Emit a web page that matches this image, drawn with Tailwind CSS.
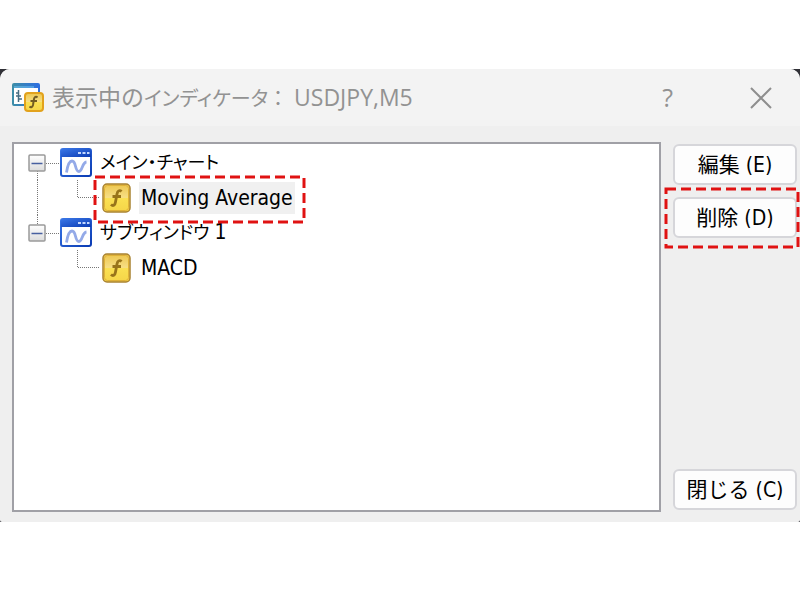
<!DOCTYPE html>
<html lang="ja">
<head>
    <meta charset="UTF-8">
    <meta name="viewport" content="width=device-width, initial-scale=1.0">
    <title>表示中のインディケータ</title>
    <script src="https://cdn.jsdelivr.net/npm/@tailwindcss/browser@4"></script>
</head>
<body class="flex min-h-screen flex-col bg-white pt-[69px] pb-[78px]">
    <!-- Shared icons -->
    <svg class="absolute h-0 w-0" aria-hidden="true">
        <defs>
            <linearGradient id="gold" x1="0" y1="0" x2="0" y2="1">
                <stop offset="0" stop-color="#edc64e"/>
                <stop offset=".48" stop-color="#f6de84"/>
                <stop offset=".52" stop-color="#fae052"/>
                <stop offset="1" stop-color="#f5d548"/>
            </linearGradient>
            <linearGradient id="blue" x1="0" y1="0" x2="1" y2="1">
                <stop offset="0" stop-color="#3a76e6"/>
                <stop offset="1" stop-color="#0b3cb4"/>
            </linearGradient>
            <linearGradient id="pane" x1="0" y1="0" x2="1" y2="0">
                <stop offset="0" stop-color="#3d8da8"/>
                <stop offset="1" stop-color="#2d6fe0"/>
            </linearGradient>
            <linearGradient id="key" x1="0" y1="0" x2="0" y2="1">
                <stop offset="0" stop-color="#ffffff"/>
                <stop offset="1" stop-color="#dcdcdc"/>
            </linearGradient>
        </defs>
        <symbol id="icon-chart" viewBox="0 0 32 29">
            <rect x="1" y="1" width="30" height="27" rx="2" fill="#fff" stroke="url(#blue)" stroke-width="2"/>
            <path d="M1 9V2.500Q1 1 2.500 1H29.500Q31 1 31 2.500V9Z" fill="url(#blue)"/>
            <path d="M18 4h3v2h-3zM22.500 4h3v2h-3zM27 4h2.500v2H27z" fill="#c4d8ff"/>
            <path d="M6.500 24.500C7.500 18 9 13 12 13C16.500 13 14.500 23.500 19 23.500C22.500 23.500 22 14.500 26.500 14" fill="none" stroke="#94aae8" stroke-width="2.800"/>
        </symbol>
        <symbol id="icon-function" viewBox="0 0 30 30">
            <rect x="1" y="1" width="27" height="28" rx="4" fill="url(#gold)" stroke="#a98332" stroke-width="1.500"/>
            <rect x="2.500" y="2.500" width="24" height="25" rx="3" fill="none" stroke="#dfb137"/>
            <path d="M19.500 8.500C17.500 6.500 15.500 8 15 11L13.500 19C13 22.500 11 23.500 9 21.500M10.500 13.500H19" fill="none" stroke="#98741a" stroke-width="2.800"/>
        </symbol>
    </svg>

    <div class="flex flex-1 flex-col bg-[#303036]">
        <div class="flex flex-1 flex-col overflow-hidden rounded-t-[10px] rounded-b-[2px] bg-[#efefef]">
            <!-- Title bar -->
            <header class="flex h-[57px] items-center bg-[#f3f3f3] pr-7 pl-3 text-[#929292]">
                <svg class="h-8 w-8 shrink-0" viewBox="0 0 32 32">
                    <rect x="1" y="2" width="26" height="21" rx="1" fill="#fff" stroke="url(#pane)" stroke-width="2"/>
                    <path d="M1 2H27V6H1Z" fill="url(#pane)"/>
                    <path d="M2 5H22" stroke="#73c6f5" stroke-width="1"/>
                    <path d="M6.500 8V20M4 11H6.500M6.500 17H10M4 14H9" fill="none" stroke="#476d83" stroke-width="1.500"/>
                    <rect x="13" y="11" width="18" height="18" rx="3" fill="url(#gold)" stroke="#e2a21c" stroke-width="2"/>
                    <path d="M25.500 15.500C24 14 22.500 15 22 17L21 23C20.500 25 19 26 17.500 24.500M18.500 19H25" fill="none" stroke="#725c22" stroke-width="2"/>
                </svg>
                <h1 class="ml-2 flex-1 font-['Open_Sans','Noto_Sans_CJK_JP',sans-serif] text-[23px]">表示中の<span class="text-[20px] [font-feature-settings:'palt']">インディケータ</span><span class="text-[20px]">：</span><span class="ml-[6px]">USDJPY,M5</span></h1>
                <button type="button" aria-label="ヘルプ" class="mr-[77px] font-['Open_Sans',sans-serif] text-[25px]">?</button>
                <button type="button" aria-label="閉じる">
                    <svg class="h-[22px] w-[22px]" viewBox="0 0 22 22"><path d="M1 1L21 21M21 1L1 21" fill="none" stroke="#8e8e8e" stroke-width="2"/></svg>
                </button>
            </header>

            <main class="flex flex-1 gap-3 pt-4 pr-[3px] pb-[10px] pl-3 font-['DejaVu_Sans_Condensed','Noto_Sans_CJK_JP',sans-serif] text-black">
                <!-- Indicator tree -->
                <ul class="flex-1 border-2 border-[#a0a0a6] bg-white pt-px pl-[14px] leading-6">
                    <li class="flex h-[35px] items-center">
                        <button type="button" aria-label="折りたたむ" class="h-[35px] w-8">
                            <svg class="h-[35px] w-8" viewBox="0 0 32 35">
                                <path d="M9.500 26V35M18 18.500H32" stroke="#777" stroke-dasharray="1 1"/>
                                <rect x="1" y="10" width="16" height="16" rx="1" fill="url(#key)" stroke="#9a9a9a" stroke-width="1.500"/>
                                <path d="M3.500 18.500H14.500" stroke="#4860a0" stroke-width="1.500"/>
                            </svg>
                        </button>
                        <svg class="h-[29px] w-8"><use href="#icon-chart"/></svg>
                        <span class="ml-2 text-[18px] [font-feature-settings:'palt']">メイン・チャート</span>
                    </li>
                    <li class="relative flex h-[35px] items-center">
                        <svg class="h-[35px] w-[74px]" viewBox="0 0 74 35">
                            <path d="M9.500 0V35M49.500 0V17.500H72" fill="none" stroke="#777" stroke-dasharray="1 1"/>
                        </svg>
                        <svg class="h-[30px] w-[30px]"><use href="#icon-function"/></svg>
                        <span class="ml-[7px] bg-[#f0f0f0] px-[2px] py-1 text-[21px]">Moving Average</span>
                        <svg class="pointer-events-none absolute -top-[5px] left-[65px] z-10 h-[49px] w-[213px]">
                            <rect x="2" y="2" width="209" height="45" fill="none" stroke="#e01212" stroke-width="3" stroke-dasharray="10 5"/>
                        </svg>
                    </li>
                    <li class="flex h-[35px] items-center">
                        <button type="button" aria-label="折りたたむ" class="h-[35px] w-8">
                            <svg class="h-[35px] w-8" viewBox="0 0 32 35">
                                <path d="M9.500 0V9M18 18.500H32" stroke="#777" stroke-dasharray="1 1"/>
                                <rect x="1" y="10" width="16" height="16" rx="1" fill="url(#key)" stroke="#9a9a9a" stroke-width="1.500"/>
                                <path d="M3.500 18.500H14.500" stroke="#4860a0" stroke-width="1.500"/>
                            </svg>
                        </button>
                        <svg class="h-[29px] w-8"><use href="#icon-chart"/></svg>
                        <span class="ml-2 text-[18px] [font-feature-settings:'palt']">サブウィンドウ <span class="text-[21px]">1</span></span>
                    </li>
                    <li class="flex h-[35px] items-center">
                        <svg class="h-[35px] w-[74px]" viewBox="0 0 74 35">
                            <path d="M49.500 0V17.500H72" fill="none" stroke="#777" stroke-dasharray="1 1"/>
                        </svg>
                        <svg class="h-[30px] w-[30px]"><use href="#icon-function"/></svg>
                        <span class="ml-[7px] px-[2px] py-1 text-[21px]">MACD</span>
                    </li>
                </ul>

                <!-- Actions -->
                <div class="flex w-[124px] flex-col gap-3 py-[2px] text-[21px]">
                    <button type="button" class="h-[41px] rounded-md border-2 border-[#d6d6da] bg-[#fdfdfd] leading-6">編集 (E)</button>
                    <div class="relative flex flex-col">
                        <button type="button" class="h-[41px] rounded-md border-2 border-[#d6d6da] bg-[#fdfdfd] leading-6">削除 (D)</button>
                        <svg class="pointer-events-none absolute -top-[10px] -left-[9px] h-[62px] w-[136px]">
                            <rect x="2" y="2" width="132" height="58" fill="none" stroke="#e01212" stroke-width="3" stroke-dasharray="10 5"/>
                        </svg>
                    </div>
                    <button type="button" class="mt-auto h-[41px] rounded-md border-2 border-[#d6d6da] bg-[#fdfdfd] leading-6">閉じる (C)</button>
                </div>
            </main>
        </div>
    </div>
</body>
</html>
